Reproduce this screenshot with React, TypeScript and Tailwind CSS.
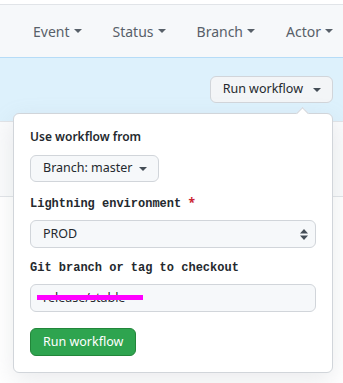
function Caret({ className = '' }: { className?: string }) {
  return (
    <svg className={className} width="8" height="4" viewBox="0 0 8 4" fill="currentColor">
      <path d="M0 0h8L4 4z" />
    </svg>
  );
}

function UpDown() {
  return (
    <svg width="8" height="11" viewBox="0 0 8 11" fill="#444d56">
      <path d="M0 4.5L4 0l4 4.5z" />
      <path d="M0 6.5L4 11l4-4.5z" />
    </svg>
  );
}

const filters = ['Event', 'Status', 'Branch', 'Actor'];

export default function App() {
  return (
    <div className="relative w-[343px] h-[383px] overflow-hidden bg-white" style={{ fontFamily: '"Noto Sans", "Open Sans", sans-serif' }}>
      {/* Filter bar */}
      <div className="mt-[4px] h-[53px] border-t border-[#e1e4e8] bg-[#f6f8fa] flex items-center justify-end pr-[10px] gap-[31px] text-[14px] text-[#586069]">
        {filters.map((f) => (
          <div key={f} className="flex items-center gap-[4px]">
            <span>{f}</span>
            <Caret className="text-[#586069]" />
          </div>
        ))}
      </div>

      {/* Blue flash with run button */}
      <div className="h-[64px] border-t border-[#b6dcf7] bg-[#ddf1fc] flex justify-end pr-[10px] pt-[18px]">
        <button className="h-[27px] pl-[12px] pr-[11px] flex items-center gap-[10px] rounded-md border border-[#d1d5da] bg-[#f3f5f7] text-[12.5px] text-[#24292e]">
          <span>Run workflow</span>
          <Caret className="text-[#444d56]" />
        </button>
      </div>

      <div className="h-[75px] border-t border-[#e1e4e8] bg-[#fafbfc]" />
      <div className="border-t border-[#e1e4e8]" />

      {/* Dropdown panel */}
      <div className="absolute left-[13px] top-[113px] w-[320px] rounded-md border border-[#d1d5da] bg-white p-[16px] shadow-[0_8px_24px_rgba(149,157,165,0.2)]">
        <div className="absolute -top-[5px] right-[25px] w-[9px] h-[9px] rotate-45 bg-white border-l border-t border-[#d1d5da]" />

        <div className="text-[12px] leading-[14px] font-semibold text-[#24292e]">Use workflow from</div>
        <button className="mt-[11px] h-[27px] pl-[12px] pr-[11px] flex items-center gap-[6px] rounded-md border border-[#d1d5da] bg-[#f6f8fa] text-[12.5px] text-[#24292e]">
          <span>Branch: master</span>
          <Caret className="text-[#444d56]" />
        </button>

        <div className="mt-[14px] text-[12px] leading-[14px] font-bold text-[#24292e]" style={{ fontFamily: '"Liberation Mono", monospace' }}>
          Lightning environment <span className="text-[#cb2431]" style={{ fontFamily: '"Noto Sans", sans-serif' }}>*</span>
        </div>
        <div className="mt-[9px] h-[28px] w-[286px] flex items-center justify-between pl-[12px] pr-[7px] rounded-md border border-[#d1d5da] bg-[#f6f8fa] text-[12.5px] text-[#24292e]">
          <span>PROD</span>
          <UpDown />
        </div>

        <div className="mt-[13px] text-[12px] leading-[14px] font-bold text-[#24292e]" style={{ fontFamily: '"Liberation Mono", monospace' }}>
          Git branch or tag to checkout
        </div>
        <div className="relative mt-[9px] h-[28px] w-[286px] flex items-center pl-[12px] rounded-md border border-[#d1d5da] bg-[#f6f8fa] text-[12.5px] text-[#24292e]">
          <span>release/stable</span>
          <div className="absolute left-[6px] top-[10px] w-[106px] h-[5px] bg-[#ff00ff]" />
        </div>

        <button className="mt-[16px] h-[28px] px-[12px] rounded-md border border-[#22863a] bg-[#2ea44f] text-[12.5px] text-white">
          Run workflow
        </button>
      </div>
    </div>
  );
}
